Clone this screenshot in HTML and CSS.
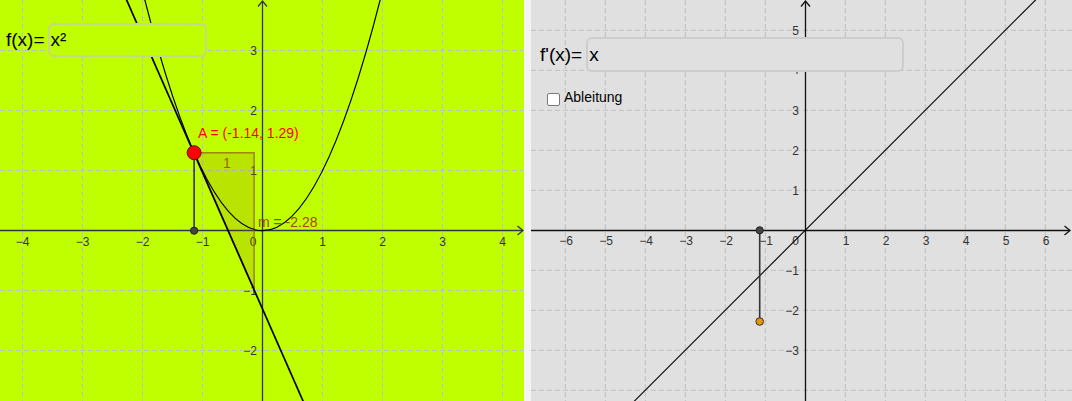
FILE: index.html
```html
<!DOCTYPE html>
<html lang="de">
<head>
<meta charset="utf-8">
<title>Ableitung</title>
<link rel="stylesheet" href="styles.css">
</head>
<body>
<div class="app">
  <section class="view view-left">
    <svg class="plot" width="524" height="401" viewBox="0 0 524 401">
      <g class="grid">
        <line x1="22.5" y1="0" x2="22.5" y2="401"/>
        <line x1="82.5" y1="0" x2="82.5" y2="401"/>
        <line x1="142.5" y1="0" x2="142.5" y2="401"/>
        <line x1="202.5" y1="0" x2="202.5" y2="401"/>
        <line x1="322.5" y1="0" x2="322.5" y2="401"/>
        <line x1="382.5" y1="0" x2="382.5" y2="401"/>
        <line x1="442.5" y1="0" x2="442.5" y2="401"/>
        <line x1="502.5" y1="0" x2="502.5" y2="401"/>
        <line x1="0" y1="50.5" x2="524" y2="50.5"/>
        <line x1="0" y1="110.5" x2="524" y2="110.5"/>
        <line x1="0" y1="170.5" x2="524" y2="170.5"/>
        <line x1="0" y1="290.5" x2="524" y2="290.5"/>
        <line x1="0" y1="350.5" x2="524" y2="350.5"/>
      </g>
      <g class="ticks">
        <text x="22.5" y="246" text-anchor="middle">−4</text>
        <text x="82.5" y="246" text-anchor="middle">−3</text>
        <text x="142.5" y="246" text-anchor="middle">−2</text>
        <text x="202.5" y="246" text-anchor="middle">−1</text>
        <text x="253" y="246" text-anchor="middle">0</text>
        <text x="322.5" y="246" text-anchor="middle">1</text>
        <text x="382.5" y="246" text-anchor="middle">2</text>
        <text x="442.5" y="246" text-anchor="middle">3</text>
        <text x="502.5" y="246" text-anchor="middle">4</text>
        <text x="257" y="55" text-anchor="end">3</text>
        <text x="257" y="115" text-anchor="end">2</text>
        <text x="257" y="175" text-anchor="end">1</text>
        <text x="257" y="295" text-anchor="end">−1</text>
        <text x="257" y="355" text-anchor="end">−2</text>
      </g>
      <g class="axes-left">
        <line x1="0" y1="230.5" x2="523" y2="230.5"/>
        <polyline points="517.5,226 523,230.5 517.5,235"/>
        <line x1="262.5" y1="401" x2="262.5" y2="1"/>
        <polyline points="258,6.5 262.5,1 267,6.5"/>
      </g>
      <polygon class="slope-tri" points="194.1,152.7 254.1,152.7 254.1,289.5"/>
      <path class="curve" d="M142.5,-9.3 Q262.5,470.7 382.5,-9.3"/>
      <line class="tangent" x1="124.4" y1="-5" x2="304.8" y2="405"/>
      <line class="seg" x1="194.1" y1="152.7" x2="194.1" y2="230.7"/>
      <circle class="pt-dark" cx="194.1" cy="230.7" r="3.6"/>
      <circle class="pt-red" cx="194.1" cy="152.7" r="7"/>
      <text class="lbl-a" x="198" y="138">A = (-1.14, 1.29)</text>
      <text class="lbl-one" x="223" y="168">1</text>
      <text class="lbl-m" x="258" y="227">m = -2.28</text>
    </svg>
    <div class="input-row input-row-f">
      <span class="fn-label">f(x)=</span>
      <div class="fn-box fn-box-left">x²</div>
    </div>
  </section>
  <div class="divider"></div>
  <section class="view view-right">
    <svg class="plot" width="541" height="401" viewBox="0 0 541 401">
      <g class="grid">
        <line x1="34.3" y1="0" x2="34.3" y2="401"/>
        <line x1="74.3" y1="0" x2="74.3" y2="401"/>
        <line x1="114.3" y1="0" x2="114.3" y2="401"/>
        <line x1="154.3" y1="0" x2="154.3" y2="401"/>
        <line x1="194.3" y1="0" x2="194.3" y2="401"/>
        <line x1="234.3" y1="0" x2="234.3" y2="401"/>
        <line x1="314.3" y1="0" x2="314.3" y2="401"/>
        <line x1="354.3" y1="0" x2="354.3" y2="401"/>
        <line x1="394.3" y1="0" x2="394.3" y2="401"/>
        <line x1="434.3" y1="0" x2="434.3" y2="401"/>
        <line x1="474.3" y1="0" x2="474.3" y2="401"/>
        <line x1="514.3" y1="0" x2="514.3" y2="401"/>
        <line x1="0" y1="30.3" x2="541" y2="30.3"/>
        <line x1="0" y1="70.3" x2="541" y2="70.3"/>
        <line x1="0" y1="110.3" x2="541" y2="110.3"/>
        <line x1="0" y1="150.3" x2="541" y2="150.3"/>
        <line x1="0" y1="190.3" x2="541" y2="190.3"/>
        <line x1="0" y1="270.3" x2="541" y2="270.3"/>
        <line x1="0" y1="310.3" x2="541" y2="310.3"/>
        <line x1="0" y1="350.3" x2="541" y2="350.3"/>
        <line x1="0" y1="390.3" x2="541" y2="390.3"/>
      </g>
      <g class="ticks">
        <text x="35" y="245" text-anchor="middle">−6</text>
        <text x="75" y="245" text-anchor="middle">−5</text>
        <text x="115" y="245" text-anchor="middle">−4</text>
        <text x="155" y="245" text-anchor="middle">−3</text>
        <text x="195" y="245" text-anchor="middle">−2</text>
        <text x="235" y="245" text-anchor="middle">−1</text>
        <text x="264.7" y="245" text-anchor="middle">0</text>
        <text x="315" y="245" text-anchor="middle">1</text>
        <text x="355" y="245" text-anchor="middle">2</text>
        <text x="395" y="245" text-anchor="middle">3</text>
        <text x="435" y="245" text-anchor="middle">4</text>
        <text x="475" y="245" text-anchor="middle">5</text>
        <text x="515" y="245" text-anchor="middle">6</text>
        <text x="268" y="34.5" text-anchor="end">5</text>
        <text x="268" y="73.5" text-anchor="end">4</text>
        <text x="268" y="114.5" text-anchor="end">3</text>
        <text x="268" y="154.5" text-anchor="end">2</text>
        <text x="268" y="194.5" text-anchor="end">1</text>
        <text x="268" y="274.5" text-anchor="end">−1</text>
        <text x="268" y="314.5" text-anchor="end">−2</text>
        <text x="268" y="354.5" text-anchor="end">−3</text>
      </g>
      <g class="axes-right">
        <line x1="0" y1="230.5" x2="539" y2="230.5"/>
        <polyline points="533.5,226 539,230.5 533.5,235"/>
        <line x1="274.5" y1="401" x2="274.5" y2="1"/>
        <polyline points="270,6.5 274.5,1 279,6.5"/>
      </g>
      <line class="deriv" x1="99.5" y1="405" x2="509.6" y2="-5"/>
      <line class="seg" x1="228.7" y1="230.3" x2="228.7" y2="321.5"/>
      <circle class="pt-dark" cx="228.7" cy="230.3" r="3.6"/>
      <circle class="pt-orange" cx="228.7" cy="321.5" r="3.8"/>
    </svg>
    <div class="input-row input-row-d">
      <span class="fn-label fn-label-d">f'(x)=</span>
      <div class="fn-box fn-box-right">x</div>
    </div>
    <label class="check-row">
      <span class="check-box"></span>
      <span class="check-text">Ableitung</span>
    </label>
  </section>
</div>
</body>
</html>
```

FILE: styles.css
```css
html, body {
  margin: 0;
  padding: 0;
}

body {
  width: 1072px;
  height: 401px;
  overflow: hidden;
  font-family: "Liberation Sans", Arial, sans-serif;
  background: #ffffff;
}

.app {
  display: flex;
  height: 401px;
}

.view {
  position: relative;
  height: 401px;
  overflow: hidden;
  flex: none;
}

.view-left {
  width: 524px;
  background: #c0ff00;
}

.divider {
  width: 7px;
  flex: none;
  background: #f3f3f3;
}

.view-right {
  width: 541px;
  background: #e0e0e0;
}

.plot {
  display: block;
}

.grid line {
  stroke: #c0c0c0;
  stroke-width: 1;
  stroke-dasharray: 5 3;
}

.ticks text {
  font-family: "Liberation Sans", Arial, sans-serif;
  font-size: 12px;
  fill: #333333;
}

.axes-left line,
.axes-left polyline {
  stroke: #36334f;
  stroke-width: 1.3;
  fill: none;
}

.axes-right line,
.axes-right polyline {
  stroke: #111111;
  stroke-width: 1.3;
  fill: none;
}

.slope-tri {
  fill: #996600;
  fill-opacity: 0.18;
  stroke: #996600;
  stroke-width: 1.5;
  stroke-opacity: 0.8;
}

.curve {
  fill: none;
  stroke: #000000;
  stroke-width: 1.2;
}

.tangent {
  stroke: #000000;
  stroke-width: 1.7;
}

.deriv {
  stroke: #000000;
  stroke-width: 1.1;
}

.seg {
  stroke: #333333;
  stroke-width: 1.6;
}

.pt-dark {
  fill: #444444;
  stroke: #222222;
  stroke-width: 1;
}

.pt-red {
  fill: #ff0000;
  stroke: #661111;
  stroke-width: 1;
}

.pt-orange {
  fill: #e69500;
  stroke: #333333;
  stroke-width: 1;
}

.lbl-a {
  font-family: "Liberation Sans", Arial, sans-serif;
  font-size: 14px;
  fill: #ff0000;
}

.lbl-one {
  font-family: "Liberation Sans", Arial, sans-serif;
  font-size: 14px;
  fill: #996600;
}

.lbl-m {
  font-family: "Liberation Sans", Arial, sans-serif;
  font-size: 14px;
  fill: #a04a00;
}

.input-row {
  position: absolute;
  display: flex;
  align-items: center;
}

.input-row-f {
  left: 6px;
  top: 23px;
  gap: 3px;
}

.input-row-d {
  left: 9px;
  top: 37px;
  gap: 4px;
}

.fn-label {
  font-size: 19px;
  color: #000000;
  white-space: nowrap;
}

.fn-box {
  box-sizing: border-box;
  display: flex;
  align-items: center;
  padding-left: 1px;
  border: 2px solid #cacaca;
  border-radius: 6px;
  font-size: 19px;
  color: #000000;
}

.fn-box-left {
  width: 159px;
  height: 34px;
  background: #c0ff00;
  border-color: #c4d88a;
}

.fn-box-right {
  width: 318px;
  height: 35px;
  background: #e0e0e0;
  border-color: #cdcdcd;
}

.check-row {
  position: absolute;
  left: 16px;
  top: 89px;
  display: flex;
  align-items: flex-start;
  gap: 4px;
  line-height: 16px;
}

.check-box {
  box-sizing: border-box;
  width: 13px;
  height: 13px;
  margin-top: 4px;
  border: 1.5px solid #7a7a7a;
  border-radius: 2px;
  background: #ffffff;
}

.check-text {
  font-size: 14px;
  color: #000000;
}
```
